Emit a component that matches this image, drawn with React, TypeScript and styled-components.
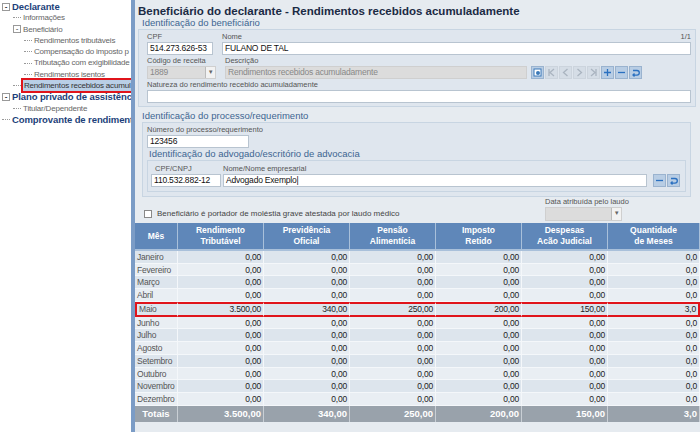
import React from "react";
import styled, { createGlobalStyle } from "styled-components";

const Global = createGlobalStyle`
  html, body { margin: 0; padding: 0; }
  *, *::before, *::after { box-sizing: border-box; }
  body { font-family: "Liberation Sans", Arial, sans-serif; font-size: 10px; color: #222; }
`;

const Page = styled.div`
  display: flex;
  width: 700px;
  height: 432px;
  overflow: hidden;
  background: #fff;
`;

const Sidebar = styled.div`
  width: 135px;
  flex-shrink: 0;
  background: #fff;
  padding-top: 1px;
  overflow: hidden;
  white-space: nowrap;
  border-right: 4px solid #7b9cc6;
`;

const TreeItem = styled.div<{ $level: number; $bold?: boolean }>`
  height: 11.3px;
  line-height: 11.3px;
  padding-left: ${(p) => 2 + p.$level * 11}px;
  font-size: ${(p) => (p.$bold ? 9.5 : 8)}px;
  letter-spacing: ${(p) => (p.$bold ? "-0.1px" : "-0.2px")};
  font-weight: ${(p) => (p.$bold ? 700 : 400)};
  color: ${(p) => (p.$bold ? "#1c3f7a" : "#666")};
  display: flex;
  align-items: center;
  gap: 2px;
`;

const Label = styled.span<{ $selected?: boolean }>`
  ${(p) =>
    p.$selected &&
    `background: #b9cfe6; color: #333; outline: 2px solid #e0141b; padding: 0 1px;`}
`;

const Toggle = styled.span`
  width: 8px;
  height: 8px;
  border: 1px solid #999;
  font-size: 8px;
  line-height: 5px;
  text-align: center;
  color: #333;
  flex-shrink: 0;
`;

const Dash = styled.span`
  width: 8px;
  border-top: 1px dotted #999;
  flex-shrink: 0;
`;

const Main = styled.div`
  flex: 1;
  min-width: 0;
  background: #e6ebf0;
  display: flex;
  flex-direction: column;
  padding-top: 4px;
`;

const Title = styled.div`
  font-size: 11.5px;
  font-weight: 700;
  color: #1b2a44;
  padding: 0 3px;
  height: 14px;
  line-height: 14px;
`;

const SectionTitle = styled.div<{ $small?: boolean }>`
  color: #3d6591;
  font-size: ${(p) => (p.$small ? 9.5 : 9.5)}px;
  margin: ${(p) => (p.$small ? "1px 0 1px 2px" : "0 0 0 7px")};
  height: 10px;
  line-height: 10px;
`;

const Panel = styled.div<{ $inset?: boolean }>`
  margin: ${(p) => (p.$inset ? "0" : "1px 4px 0 3px")};
  border: 1px solid #c8d5e2;
  background: #dfe6ee;
  padding: ${(p) => (p.$inset ? "3px 4px 4px 3px" : "2px 4px 2px 8px")};
`;

const Row = styled.div`
  display: flex;
  gap: 9px;
  align-items: flex-end;
  margin-bottom: 1px;
`;

const Field = styled.div<{ $w?: number; $grow?: boolean }>`
  display: flex;
  flex-direction: column;
  width: ${(p) => (p.$w ? p.$w + "px" : "auto")};
  flex: ${(p) => (p.$grow ? 1 : "none")};
`;

const FieldLabel = styled.div`
  font-size: 7.5px;
  color: #555;
  height: 10px;
  line-height: 10px;
  display: flex;
  justify-content: space-between;
  white-space: nowrap;
`;

const Input = styled.div<{ $disabled?: boolean }>`
  height: 13px;
  line-height: 11px;
  background: ${(p) => (p.$disabled ? "#dcdcdc" : "#fff")};
  border: 1px solid ${(p) => (p.$disabled ? "#cfcfcf" : "#b8c4d0")};
  font-size: 8.5px;
  letter-spacing: -0.2px;
  color: ${(p) => (p.$disabled ? "#888" : "#111")};
  padding: 0 2px;
  display: flex;
  justify-content: space-between;
  white-space: nowrap;
  overflow: hidden;
`;

const DropBtn = styled.span`
  width: 10px;
  border-left: 1px solid #bbb;
  background: #f2f2f2;
  font-size: 6px;
  color: #666;
  text-align: center;
  margin-right: -2px;
`;

const Buttons = styled.div`
  display: flex;
`;

const IconBtn = styled.div<{ $on?: boolean }>`
  width: 13px;
  height: 13px;
  margin-right: 1px;
  background: ${(p) => (p.$on ? "#b8cde4" : "#d5dde6")};
  border: 1px solid ${(p) => (p.$on ? "#9ab3cf" : "#ccd4dd")};
  display: flex;
  align-items: center;
  justify-content: center;
  svg { display: block; }
`;

const CheckRow = styled.div`
  display: flex;
  justify-content: space-between;
  align-items: flex-end;
  padding: 0 78px 2px 9px;
  height: 26px;
`;

const CheckLabel = styled.div`
  display: flex;
  align-items: center;
  gap: 5px;
  font-size: 8px;
  color: #444;
  margin-bottom: 3px;
`;

const Box = styled.span`
  width: 8px;
  height: 8px;
  background: #fff;
  border: 1px solid #888;
`;

const Table = styled.div`
  display: grid;
  grid-template-columns: 43px repeat(5, 86px) 1fr;
  background: #fff;
`;

const Th = styled.div`
  background: #5f87b9;
  color: #fff;
  font-weight: 700;
  font-size: 8.5px;
  text-align: center;
  height: 28px;
  display: flex;
  align-items: center;
  justify-content: center;
  line-height: 11px;
  border-right: 1px solid #a9c0da;
  border-bottom: 2px solid #a9c0da;
`;

const Td = styled.div<{ $alt?: boolean; $left?: boolean; $hl?: boolean }>`
  height: 12.7px;
  line-height: 12px;
  font-size: 8.5px;
  letter-spacing: -0.2px;
  color: ${(p) => (p.$left ? "#555" : "#222")};
  background: ${(p) => (p.$alt ? "#e9eef3" : "#dde5ed")};
  text-align: ${(p) => (p.$left ? "left" : "right")};
  padding: 0 2px;
  border-right: 1px solid #f4f7fa;
  border-bottom: 1px solid #f4f7fa;
  ${(p) => p.$hl && `border-top: 2px solid #e0141b; border-bottom: 2px solid #e0141b; height: 15px; line-height: 11px;`}
`;

const Tf = styled.div<{ $left?: boolean }>`
  background: #99a2ab;
  color: #fff;
  font-weight: 700;
  font-size: 9.5px;
  height: 16px;
  line-height: 16px;
  text-align: ${(p) => (p.$left ? "center" : "right")};
  padding: 0 2px;
  border-right: 1px solid #c9cfd5;
`;

const months = ["Janeiro","Fevereiro","Março","Abril","Maio","Junho","Julho","Agosto","Setembro","Outubro","Novembro","Dezembro"];
const heads = [["Mês"],["Rendimento","Tributável"],["Previdência","Oficial"],["Pensão","Alimentícia"],["Imposto","Retido"],["Despesas","Acão Judicial"],["Quantidade","de Meses"]];

const Tri = ({ d, c = "#aab4c0" }: { d: string; c?: string }) => (
  <svg width="9" height="9" viewBox="0 0 9 9"><path d={d} fill="none" stroke={c} strokeWidth="1.3" /></svg>
);

export default function App() {
  return (
    <Page>
      <Global />
      <Sidebar>
        <TreeItem $level={0} $bold><Toggle>-</Toggle>Declarante</TreeItem>
        <TreeItem $level={1}><Dash />Informações</TreeItem>
        <TreeItem $level={1}><Toggle>-</Toggle>Beneficiário</TreeItem>
        <TreeItem $level={2}><Dash />Rendimentos tributáveis</TreeItem>
        <TreeItem $level={2}><Dash />Compensação do imposto p</TreeItem>
        <TreeItem $level={2}><Dash />Tributação com exigibilidade</TreeItem>
        <TreeItem $level={2}><Dash />Rendimentos isentos</TreeItem>
        <TreeItem $level={1}><Dash /><Label $selected>Rendimentos recebidos acumul</Label></TreeItem>
        <TreeItem $level={0} $bold><Toggle>-</Toggle>Plano privado de assistência à</TreeItem>
        <TreeItem $level={1}><Dash />Titular/Dependente</TreeItem>
        <TreeItem $level={0} $bold><Dash />Comprovante de rendimentos</TreeItem>
      </Sidebar>
      <Main>
        <Title>Beneficiário do declarante - Rendimentos recebidos acumuladamente</Title>
        <SectionTitle>Identificação do beneficiário</SectionTitle>
        <Panel>
          <Row>
            <Field $w={66}><FieldLabel>CPF</FieldLabel><Input>514.273.626-53</Input></Field>
            <Field $grow><FieldLabel><span>Nome</span><span>1/1</span></FieldLabel><Input>FULANO DE TAL</Input></Field>
          </Row>
          <Row>
            <Field $w={69}><FieldLabel>Código de receita</FieldLabel><Input $disabled>1889<DropBtn>▼</DropBtn></Input></Field>
            <Field $w={302}><FieldLabel>Descrição</FieldLabel><Input $disabled>Rendimentos recebidos acumuladamente</Input></Field>
            <Buttons style={{ marginLeft: -5 }}>
              <IconBtn $on><svg width="10" height="10" viewBox="0 0 10 10"><rect x="1" y="1" width="7" height="7" fill="#fff" stroke="#3b79b8"/><circle cx="5" cy="5" r="2" fill="#3b79b8"/></svg></IconBtn>
              <IconBtn><Tri d="M2 1v7M7 1L3 4.5 7 8" /></IconBtn>
              <IconBtn><Tri d="M6.5 1L2.5 4.5 6.5 8" /></IconBtn>
              <IconBtn><Tri d="M2.5 1l4 3.5-4 3.5" /></IconBtn>
              <IconBtn><Tri d="M2 1l4 3.5L2 8M7 1v7" /></IconBtn>
              <IconBtn $on><Tri d="M4.5 1v7M1 4.5h7" c="#2a70c0" /></IconBtn>
              <IconBtn $on><Tri d="M1 4.5h7" c="#2a70c0" /></IconBtn>
              <IconBtn $on><Tri d="M2 2.5h4a2.3 2.3 0 010 4.6H2.5M3.5 5.5L2 7l1.5 1.5" c="#2a70c0" /></IconBtn>
            </Buttons>
          </Row>
          <Row>
            <Field $grow><FieldLabel>Natureza do rendimento recebido acumuladamente</FieldLabel><Input /></Field>
          </Row>
        </Panel>
        <SectionTitle style={{ marginTop: 4 }}>Identificação do processo/requerimento</SectionTitle>
        <Panel style={{ margin: "1px 9px 0 7px", padding: "2px 4px 4px 4px" }}>
          <Row>
            <Field $w={102}><FieldLabel>Número do processo/requerimento</FieldLabel><Input>123456</Input></Field>
          </Row>
          <SectionTitle $small>Identificação do advogado/escritório de advocacia</SectionTitle>
          <Panel $inset>
            <Row style={{ gap: 2, marginBottom: 0 }}>
              <Field $w={70}><FieldLabel style={{ paddingLeft: 4 }}>CPF/CNPJ</FieldLabel><Input>110.532.882-12</Input></Field>
              <Field $grow><FieldLabel>Nome/Nome empresarial</FieldLabel><Input>Advogado Exemplo|</Input></Field>
              <Buttons style={{ marginLeft: 4 }}>
                <IconBtn $on><Tri d="M1 4.5h7" c="#2a70c0" /></IconBtn>
                <IconBtn $on><Tri d="M2 2.5h4a2.3 2.3 0 010 4.6H2.5M3.5 5.5L2 7l1.5 1.5" c="#2a70c0" /></IconBtn>
              </Buttons>
            </Row>
          </Panel>
        </Panel>
        <CheckRow>
          <CheckLabel><Box />Beneficiário é portador de moléstia grave atestada por laudo médico</CheckLabel>
          <Field $w={77}><FieldLabel>Data atribuída pelo laudo</FieldLabel><Input $disabled style={{ height: 14 }}><span /><DropBtn>▼</DropBtn></Input></Field>
        </CheckRow>
        <Table>
          {heads.map((h) => (
            <Th key={h[0]}>{h.length > 1 ? <span>{h[0]}<br />{h[1]}</span> : h[0]}</Th>
          ))}
          {months.map((m, i) => {
            const hl = m === "Maio";
            const vals = hl ? ["3.500,00", "340,00", "250,00", "200,00", "150,00", "3,0"] : ["0,00", "0,00", "0,00", "0,00", "0,00", "0,0"];
            return (
              <React.Fragment key={m}>
                <Td $left $alt={i % 2 === 1} $hl={hl} style={hl ? { borderLeft: "2px solid #e0141b" } : undefined}>{m}</Td>
                {vals.map((v, j) => (
                  <Td key={j} $alt={i % 2 === 1} $hl={hl} style={hl && j === 5 ? { borderRight: "2px solid #e0141b" } : undefined}>{v}</Td>
                ))}
              </React.Fragment>
            );
          })}
          <Tf $left>Totais</Tf>
          {["3.500,00", "340,00", "250,00", "200,00", "150,00", "3,0"].map((v, j) => <Tf key={j}>{v}</Tf>)}
        </Table>
      </Main>
    </Page>
  );
}
